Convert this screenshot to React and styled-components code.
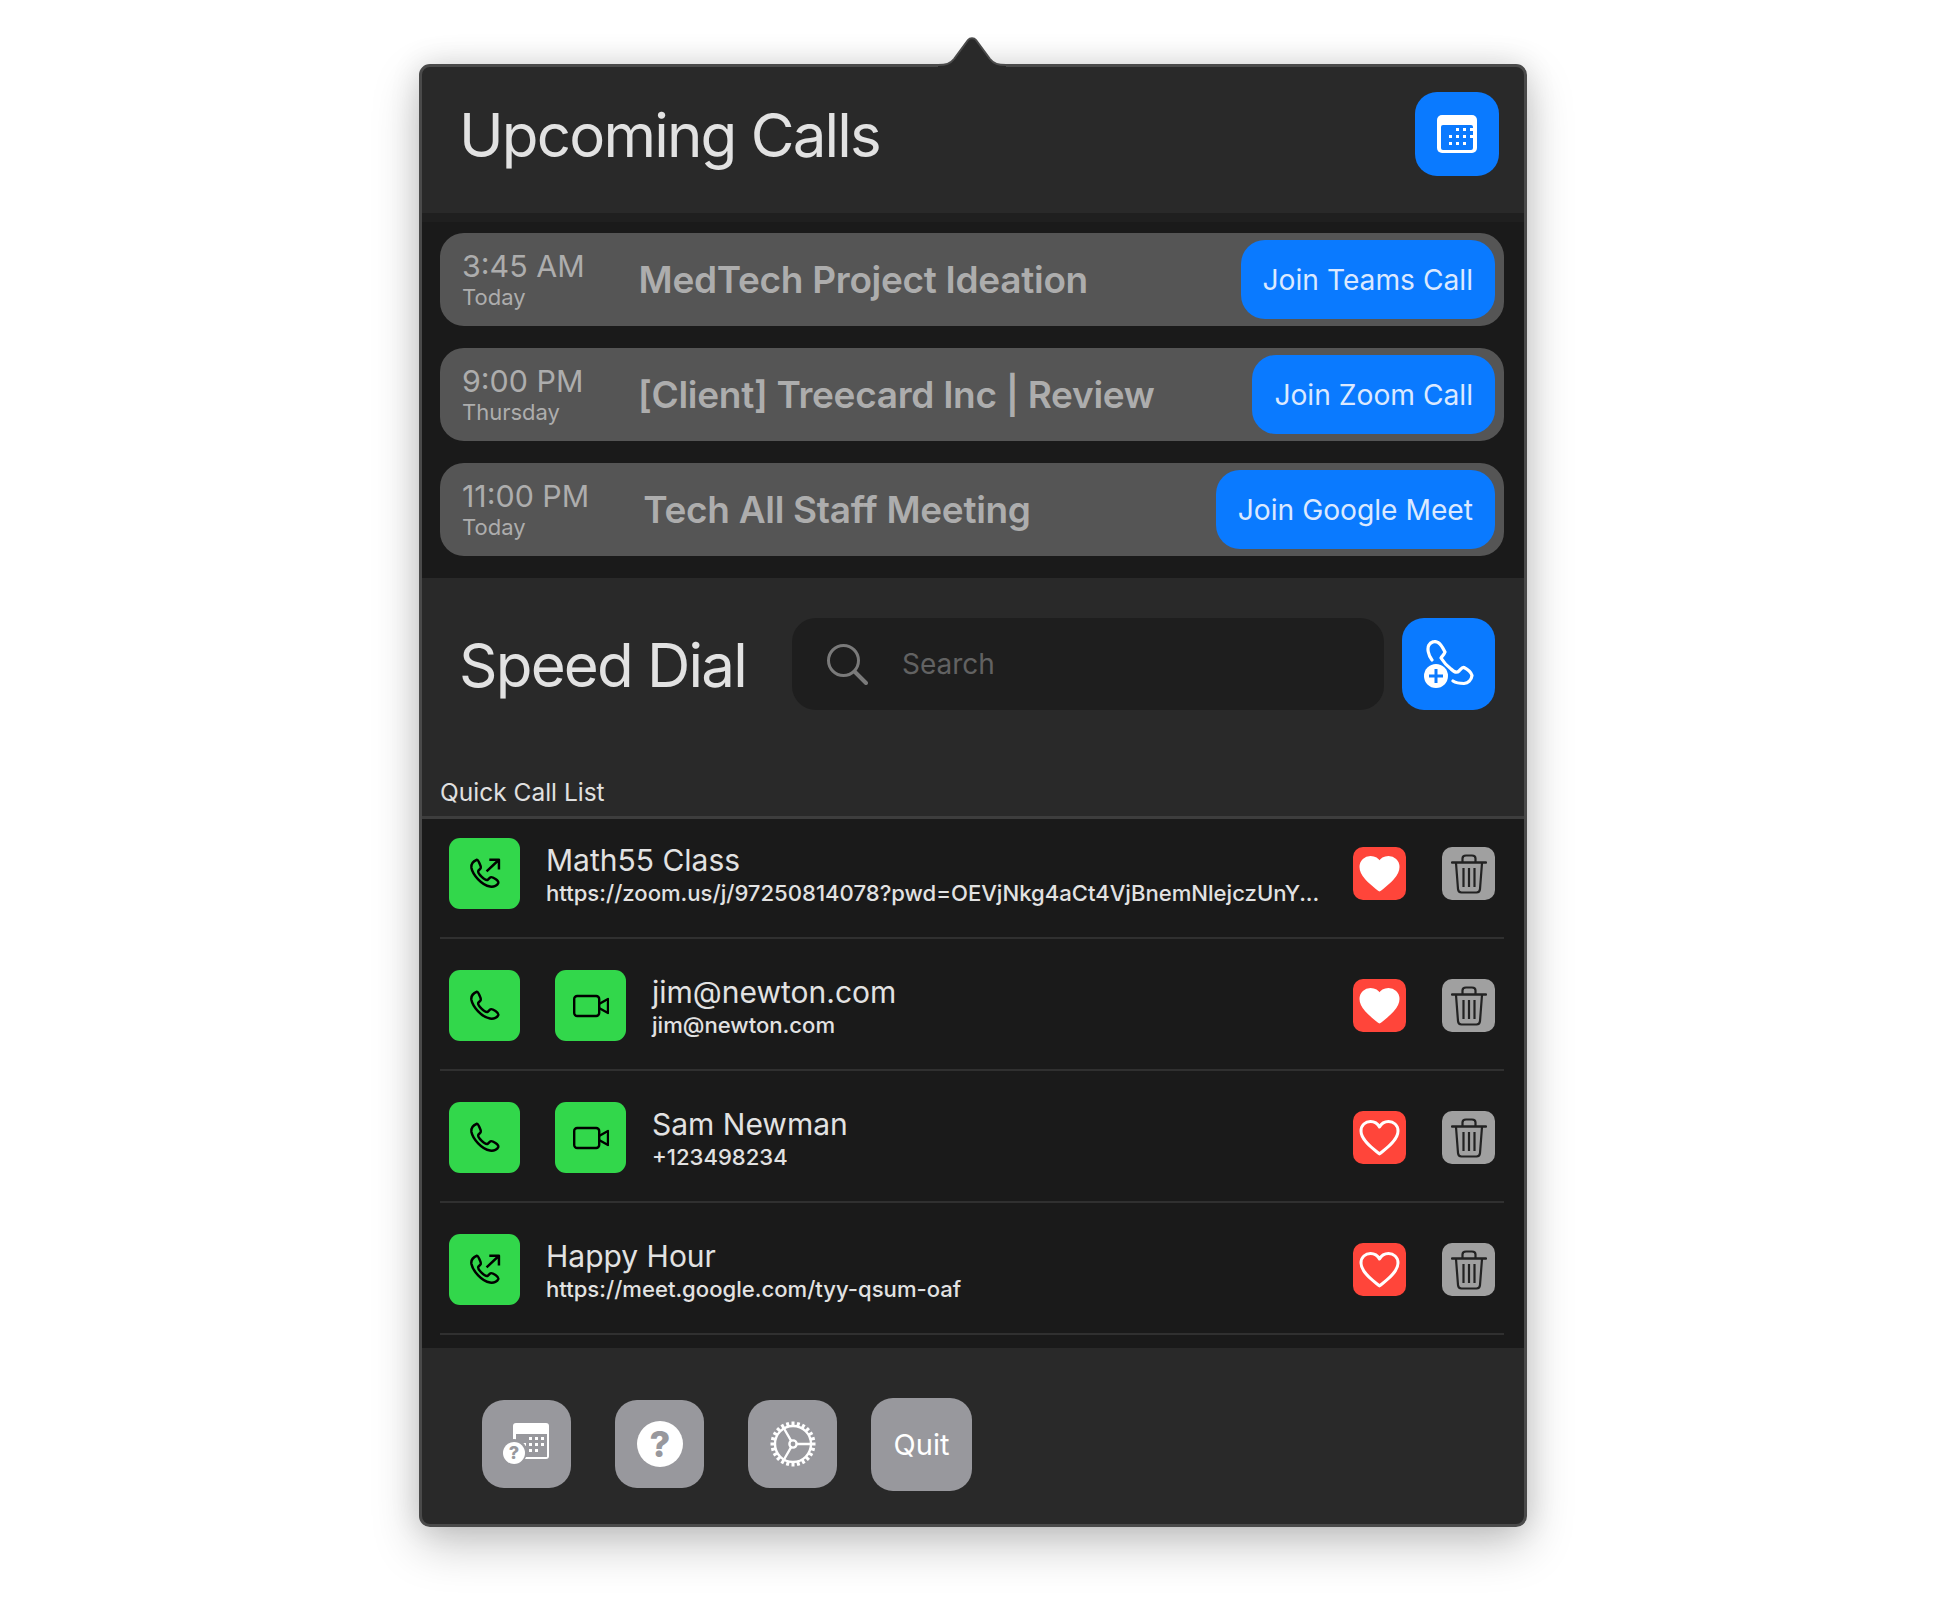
import React from 'react';
import styled, { createGlobalStyle } from 'styled-components';

const GlobalStyle = createGlobalStyle`
  html, body {
    margin: 0;
    padding: 0;
    background: #fff;
  }
  body {
    font-family: Inter, "Liberation Sans", sans-serif;
  }
`;

const Page = styled.div`
  min-height: 1600px;
  padding: 64px 1px 0 0;
  box-sizing: border-box;
`;

const Panel = styled.div`
  position: relative;
  width: 1108px;
  margin: 0 auto;
  box-sizing: border-box;
  background: #292929;
  border: 3px solid #4a4a4a;
  border-radius: 11px;
  box-shadow: 0 18px 48px rgba(0, 0, 0, 0.22), 0 0 30px rgba(0, 0, 0, 0.12);
`;

const Arrow = styled.svg`
  position: absolute;
  top: -30px;
  left: 516px;
  display: block;
`;

const Header = styled.header`
  height: 146px;
  display: flex;
  align-items: center;
  justify-content: space-between;
  padding: 0 25px 12px 37px;
  box-sizing: border-box;
`;

const Title = styled.h1`
  margin: 2px 0 0;
  font-size: 60px;
  font-weight: 400;
  letter-spacing: -1.8px;
  color: #e2e2e2;
`;

const BlueButton = styled.button`
  display: flex;
  align-items: center;
  justify-content: center;
  flex: none;
  width: ${({ $width }) => $width}px;
  height: ${({ $height }) => $height}px;
  padding: 0;
  border: none;
  border-radius: 22px;
  background: #0a7aff;
`;

const Upcoming = styled.section`
  display: flex;
  flex-direction: column;
  gap: 22px;
  padding: 20px 20px 22px 18px;
  background: linear-gradient(#1f1f1f 0, #1f1f1f 9px, #1a1a1a 9px);
`;

const CallRow = styled.div`
  display: flex;
  align-items: center;
  height: 93px;
  gap: 54px;
  padding: 0 9px 0 22px;
  box-sizing: border-box;
  border-radius: 24px;
  background: #555;
  color: #adadad;
`;

const CallTime = styled.div`
  display: flex;
  flex-direction: column;
  flex: none;
  min-width: 122px;
  padding-top: 1px;
`;

const TimeText = styled.span`
  font-size: 30.4px;
  line-height: 34px;
  white-space: nowrap;
`;

const DayText = styled.span`
  font-size: 22px;
  line-height: 28px;
`;

const CallName = styled.div`
  flex: 1;
  font-size: 37px;
  font-weight: 600;
  letter-spacing: -0.3px;
  white-space: nowrap;
`;

const JoinButton = styled.button`
  flex: none;
  height: 79px;
  padding: 0 22px;
  border: none;
  border-radius: 24px;
  background: #0a7aff;
  color: #dbe9ff;
  font-family: inherit;
  font-size: 28.2px;
`;

const SpeedDial = styled.section`
  display: flex;
  align-items: center;
  padding: 40px 29px 0 37px;
`;

const DialTitle = styled(Title)`
  flex: none;
  width: 333px;
`;

const Search = styled.div`
  flex: 1;
  display: flex;
  align-items: center;
  gap: 34px;
  height: 92px;
  margin-right: 18px;
  padding-left: 34px;
  border-radius: 24px;
  background: #1e1e1e;
  color: #626262;
  font-size: 28px;
`;

const ListLabel = styled.div`
  margin-top: 68px;
  padding: 0 0 9px 18px;
  border-bottom: 3px solid #3d3d3d;
  font-size: 24.5px;
  line-height: 29px;
  color: #e0e0e0;
`;

const List = styled.ul`
  margin: 0;
  padding: 0 20px 13px 18px;
  list-style: none;
  background: #1a1a1a;
`;

const Row = styled.li`
  display: flex;
  align-items: center;
  padding: 31px 9px 28px;
  border-bottom: 2px solid #303030;
  &:first-child {
    padding-top: 19px;
  }
`;

const CallIcons = styled.div`
  display: flex;
  flex: none;
  gap: 35px;
  margin-right: 26px;
`;

const GreenButton = styled.button`
  display: flex;
  align-items: center;
  justify-content: center;
  width: 71px;
  height: 71px;
  padding: 0;
  border: none;
  border-radius: 11px;
  background: #32d74b;
`;

const Info = styled.div`
  flex: 1;
  min-width: 0;
  display: flex;
  flex-direction: column;
  padding-top: 2px;
  color: #e2e2e2;
`;

const InfoName = styled.span`
  font-size: 30px;
  line-height: 37px;
`;

const InfoDetail = styled.span`
  font-size: 22.1px;
  font-weight: 500;
  line-height: 28px;
  white-space: nowrap;
`;

const SquareButton = styled.button`
  display: flex;
  align-items: center;
  justify-content: center;
  flex: none;
  width: 53px;
  height: 53px;
  margin-left: ${({ $gap }) => $gap}px;
  padding: 0;
  border: none;
  border-radius: 10px;
  background: ${({ $color }) => $color};
`;

const Footer = styled.footer`
  display: flex;
  align-items: center;
  gap: 44px;
  height: 176px;
  padding: 16px 0 0 60px;
  box-sizing: border-box;
`;

const FooterButton = styled.button`
  display: flex;
  align-items: center;
  justify-content: center;
  flex: none;
  width: 89px;
  height: 88px;
  padding: 0;
  border: none;
  border-radius: 22px;
  background: #98989d;
`;

const QuitButton = styled(FooterButton)`
  width: 101px;
  height: 93px;
  margin-left: -10px;
  color: #fff;
  font-family: inherit;
  font-size: 29px;
`;

const HANDSET =
  'M6.5 2C4 3 2 5 2.5 8C3.5 13 10 20.5 16 21.5C19 22 21.5 20.5 22 19C22.3 18 21.5 17 20 16C18 14.7 16.8 14.2 16 15L14.5 16.5C13.5 17.2 12 16.5 10 14.5C8 12.5 7 11 7.5 10L9 8.5C9.8 7.7 9.2 6.5 8.5 5C7.8 3.5 7.3 1.7 6.5 2Z';

const PhoneIcon = () => (
  <svg width="33" height="33" viewBox="0 0 24 24" fill="none" stroke="#000" strokeWidth="1.8" strokeLinejoin="round">
    <path d={HANDSET} />
  </svg>
);

const LinkPhoneIcon = () => (
  <svg width="33" height="33" viewBox="0 0 24 24" fill="none" stroke="#000" strokeWidth="1.8" strokeLinejoin="round">
    <path d={HANDSET} />
    <path d="M13.5 10.5L22.5 2M15.5 2H22.5V9" />
  </svg>
);

const VideoIcon = () => (
  <svg width="36" height="24" viewBox="0 0 36 24" fill="none" stroke="#000" strokeWidth="2.4">
    <rect x="1.2" y="2" width="25" height="20" rx="3" />
    <path d="M26 10L35 5V19L26 14" strokeLinejoin="round" />
  </svg>
);

const HeartIcon = ({ filled }) => (
  <svg width="41" height="38" viewBox="0 0 41 38">
    <path
      d="M20.5 35C16 31 2 22 2 12C2 6 6.5 2.5 11.5 2.5C15.5 2.5 18.8 4.8 20.5 8C22.2 4.8 25.5 2.5 29.5 2.5C34.5 2.5 39 6 39 12C39 22 25 31 20.5 35Z"
      fill={filled ? '#fff' : 'none'}
      stroke="#fff"
      strokeWidth="3"
      strokeLinejoin="round"
    />
  </svg>
);

const TrashIcon = () => (
  <svg width="36" height="40" viewBox="0 0 36 40" fill="none" stroke="#222" strokeWidth="2.2">
    <path d="M1 8.5H35" strokeWidth="2.4" strokeLinecap="round" />
    <path d="M11.5 8V4.5C11.5 2.5 13 1.5 15 1.5H21C23 1.5 24.5 2.5 24.5 4.5V8" />
    <path d="M5 9L7 35C7.2 37.5 8.5 38.5 10.5 38.5H25.5C27.5 38.5 28.8 37.5 29 35L31 9" />
    <path d="M12.5 14V33M18 14V33M23.5 14V33" />
  </svg>
);

const DOT_CELLS = [
  [2, 0], [3, 0], [4, 0],
  [1, 1], [2, 1], [3, 1], [4, 1],
  [1, 2], [2, 2], [3, 2],
];

const CalendarDots = ({ x, y, step, size, color }) =>
  DOT_CELLS.map(([c, r]) => (
    <rect key={`${c}-${r}`} x={x + c * step} y={y + r * step} width={size} height={size} fill={color} />
  ));

const CalendarIcon = () => (
  <svg width="40" height="38" viewBox="0 0 40 38">
    <rect width="40" height="38" rx="5" fill="#fff" />
    <rect x="4" y="10" width="32" height="25" rx="2" fill="#0a7aff" />
    <CalendarDots x={5} y={13} step={7} size={3} color="#fff" />
  </svg>
);

const AddCallIcon = () => (
  <svg width="50" height="48" viewBox="0 0 50 48" fill="none" stroke="#fff" strokeWidth="3.2" strokeLinecap="round" strokeLinejoin="round">
    <path d="M8 20C4 15 3 8 5 5C6.5 2 11 0.5 14 2.5C17 4 19 8 21 12C20 15 18 16 17 18C19.5 22 23 26 27 29C30 32 33 33 35 31C37 29 38 27 40 27.5C43 29 47 32 48 35.5C47.5 40 44 43 40 43.5C36 43.5 32 43 29 41" />
    <circle cx="12" cy="36" r="12" fill="#fff" stroke="none" />
    <path d="M12 29V43M5 36H19" stroke="#0a7aff" strokeWidth="3" strokeLinecap="butt" />
  </svg>
);

const SearchIcon = () => (
  <svg width="42" height="42" viewBox="0 0 42 42" fill="none" stroke="#7a7a7a" strokeWidth="3">
    <circle cx="17.5" cy="17.5" r="15" />
    <path d="M29 29L40 40" strokeWidth="4" strokeLinecap="round" />
  </svg>
);

const HelpBadge = ({ cx, cy, r, size, color }) => (
  <>
    <circle cx={cx} cy={cy} r={r} fill="#fff" />
    <text x={cx} y={cy + size * 0.36} textAnchor="middle" fontSize={size} fontWeight="800" fontFamily="Inter, sans-serif" fill={color}>?</text>
  </>
);

const CalendarHelpIcon = () => (
  <svg width="50" height="44" viewBox="0 0 50 44">
    <rect x="11" y="1" width="36" height="36" rx="3" fill="#fff" />
    <rect x="14" y="12" width="31" height="23" fill="#98989d" />
    <CalendarDots x={15} y={15} step={6} size={3} color="#fff" />
    <circle cx="12" cy="30" r="13" fill="#98989d" />
    <HelpBadge cx={12} cy={31} r={11} size={18} color="#98989d" />
  </svg>
);

const HelpIcon = () => (
  <svg width="46" height="46" viewBox="0 0 46 46">
    <HelpBadge cx={23} cy={23} r={23} size={36} color="#98989d" />
  </svg>
);

const TEETH = Array.from({ length: 24 }, (_, i) => i * 15);

const GearIcon = () => (
  <svg width="46" height="46" viewBox="0 0 46 46" fill="none" stroke="#fff" strokeWidth="2.4">
    {TEETH.map((deg) => (
      <path key={deg} d="M23 0.5V5" strokeWidth="3" transform={`rotate(${deg} 23 23)`} />
    ))}
    <circle cx="23" cy="23" r="18" />
    <circle cx="23" cy="23" r="3.6" />
    <path d="M27 23H41M21 19.6L14 7.5M21 26.4L14 38.5" />
  </svg>
);

const calls = [
  { time: '3:45 AM', day: 'Today', name: 'MedTech Project Ideation', action: 'Join Teams Call' },
  { time: '9:00 PM', day: 'Thursday', name: '[Client] Treecard Inc | Review', action: 'Join Zoom Call' },
  { time: '11:00 PM', day: 'Today', name: 'Tech All Staff Meeting', action: 'Join Google Meet' },
];

const contacts = [
  { name: 'Math55 Class', detail: 'https://zoom.us/j/97250814078?pwd=OEVjNkg4aCt4VjBnemNlejczUnY...', link: true, liked: true },
  { name: 'jim@newton.com', detail: 'jim@newton.com', liked: true },
  { name: 'Sam Newman', detail: '+123498234', liked: false },
  { name: 'Happy Hour', detail: 'https://meet.google.com/tyy-qsum-oaf', link: true, liked: false },
];

const App = () => (
  <Page>
    <GlobalStyle />
    <Panel>
      <Arrow width="70" height="33" viewBox="0 0 70 33">
        <path
          d="M0 28C8 28 12 27 16 22L30 3C32 0.5 36 0.5 38 3L52 22C56 27 60 28 68 28V33H0Z"
          fill="#292929"
        />
        <path
          d="M0 28C8 28 12 27 16 22L30 3C32 0.5 36 0.5 38 3L52 22C56 27 60 28 68 28"
          fill="none"
          stroke="#4a4a4a"
          strokeWidth="2"
        />
      </Arrow>
      <Header>
        <Title>Upcoming Calls</Title>
        <BlueButton $width={84} $height={84}>
          <CalendarIcon />
        </BlueButton>
      </Header>
      <Upcoming>
        {calls.map((call) => (
          <CallRow key={call.name}>
            <CallTime>
              <TimeText>{call.time}</TimeText>
              <DayText>{call.day}</DayText>
            </CallTime>
            <CallName>{call.name}</CallName>
            <JoinButton>{call.action}</JoinButton>
          </CallRow>
        ))}
      </Upcoming>
      <SpeedDial>
        <DialTitle as="h2">Speed Dial</DialTitle>
        <Search>
          <SearchIcon />
          Search
        </Search>
        <BlueButton $width={93} $height={92}>
          <AddCallIcon />
        </BlueButton>
      </SpeedDial>
      <ListLabel>Quick Call List</ListLabel>
      <List>
        {contacts.map((contact) => (
          <Row key={contact.name}>
            <CallIcons>
              <GreenButton>{contact.link ? <LinkPhoneIcon /> : <PhoneIcon />}</GreenButton>
              {!contact.link && (
                <GreenButton>
                  <VideoIcon />
                </GreenButton>
              )}
            </CallIcons>
            <Info>
              <InfoName>{contact.name}</InfoName>
              <InfoDetail>{contact.detail}</InfoDetail>
            </Info>
            <SquareButton $color="#ff453a" $gap={16}>
              <HeartIcon filled={contact.liked} />
            </SquareButton>
            <SquareButton $color="#a0a0a0" $gap={36}>
              <TrashIcon />
            </SquareButton>
          </Row>
        ))}
      </List>
      <Footer>
        <FooterButton>
          <CalendarHelpIcon />
        </FooterButton>
        <FooterButton>
          <HelpIcon />
        </FooterButton>
        <FooterButton>
          <GearIcon />
        </FooterButton>
        <QuitButton>Quit</QuitButton>
      </Footer>
    </Panel>
  </Page>
);

export default App;
